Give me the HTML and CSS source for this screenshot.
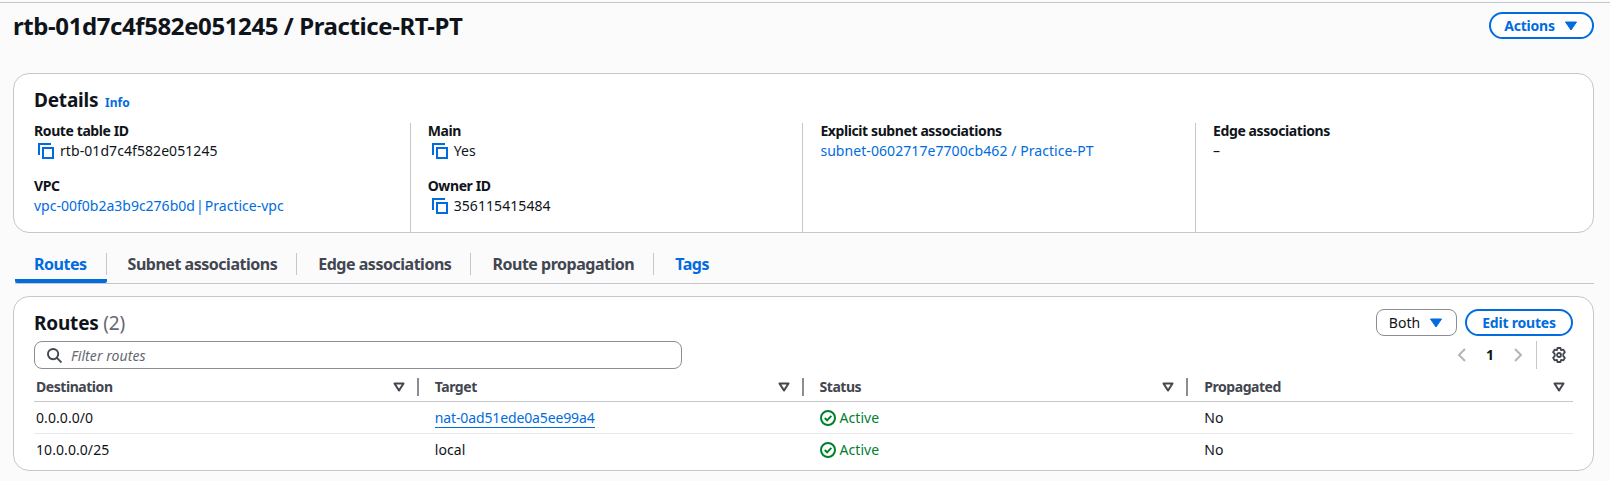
FILE: index.html
```html
<!DOCTYPE html>
<html lang="en">
<head>
<meta charset="utf-8">
<title>Route table</title>
<link rel="stylesheet" href="styles.css">
</head>
<body>
<svg class="defs" width="0" height="0" aria-hidden="true">
  <symbol id="copy" viewBox="0 0 16 16"><path d="M1 12V1h12" fill="none" stroke="currentColor" stroke-width="2"/><rect x="5" y="5" width="10" height="10" fill="none" stroke="currentColor" stroke-width="2"/></symbol>
  <symbol id="caret" viewBox="0 0 16 16"><path d="M2.5 4h11L8 12z" fill="currentColor" stroke="currentColor" stroke-width="1" stroke-linejoin="round"/></symbol>
  <symbol id="sort" viewBox="0 0 16 16"><path d="M3.5 4.5h9L8 11.5z" fill="none" stroke="currentColor" stroke-width="2" stroke-linejoin="round"/></symbol>
  <symbol id="ok" viewBox="0 0 16 16"><circle cx="8" cy="8" r="7" fill="none" stroke="currentColor" stroke-width="2"/><path d="M4.8 8l2.3 2.4 4.2-4.6" fill="none" stroke="currentColor" stroke-width="2"/></symbol>
</svg>
<main class="page">
  <header class="head">
    <h1 class="title">rtb-01d7c4f582e051245 / Practice-RT-PT</h1>
    <button class="btn btn-actions">Actions <svg class="caret"><use href="#caret"/></svg></button>
  </header>

  <section class="card details">
    <h2 class="details-title">Details <a class="info">Info</a></h2>
    <div class="cols">
      <div class="col">
        <div class="kv"><div class="k">Route table ID</div><div class="v"><svg class="copy"><use href="#copy"/></svg>rtb-01d7c4f582e051245</div></div>
        <div class="kv"><div class="k">VPC</div><div class="v link link-tight">vpc-00f0b2a3b9c276b0d | Practice-vpc</div></div>
      </div>
      <div class="col">
        <div class="kv"><div class="k">Main</div><div class="v"><svg class="copy"><use href="#copy"/></svg>Yes</div></div>
        <div class="kv"><div class="k">Owner ID</div><div class="v"><svg class="copy"><use href="#copy"/></svg>356115415484</div></div>
      </div>
      <div class="col">
        <div class="kv"><div class="k">Explicit subnet associations</div><div class="v link">subnet-0602717e7700cb462 / Practice-PT</div></div>
      </div>
      <div class="col">
        <div class="kv"><div class="k">Edge associations</div><div class="v">–</div></div>
      </div>
    </div>
  </section>

  <nav class="tabs">
    <a class="tab active">Routes</a>
    <a class="tab">Subnet associations</a>
    <a class="tab">Edge associations</a>
    <a class="tab">Route propagation</a>
    <a class="tab tab-link">Tags</a>
  </nav>

  <section class="card routes">
    <div class="routes-top">
      <h2 class="routes-title">Routes <span class="count">(2)</span></h2>
      <div class="routes-actions">
        <button class="btn-select">Both <svg class="caret"><use href="#caret"/></svg></button>
        <button class="btn btn-edit">Edit routes</button>
      </div>
    </div>
    <div class="filter-row">
      <div class="filter">
        <svg class="search" viewBox="0 0 16 16"><circle cx="6.5" cy="6.5" r="5.5" fill="none" stroke="currentColor" stroke-width="2"/><path d="M10.5 10.5L15.5 15.5" fill="none" stroke="currentColor" stroke-width="2"/></svg>
        <span class="placeholder">Filter routes</span>
      </div>
      <div class="pager">
        <svg class="chev" viewBox="0 0 16 16"><path d="M11 2L5 8l6 6" fill="none" stroke="currentColor" stroke-width="2"/></svg>
        <span class="page-num">1</span>
        <svg class="chev" viewBox="0 0 16 16"><path d="M5 2l6 6-6 6" fill="none" stroke="currentColor" stroke-width="2"/></svg>
        <span class="pager-sep"></span>
        <svg class="gear" viewBox="0 0 16 16"><path d="M6.5 1h3l.6 2.2 2.3-.6 1.5 2.6-1.6 1.7v2.2l1.6 1.7-1.5 2.6-2.3-.6-.6 2.2h-3l-.6-2.2-2.3.6-1.5-2.6 1.6-1.7V6.9L2.1 5.2l1.5-2.6 2.3.6z" fill="none" stroke="currentColor" stroke-width="1.8" stroke-linejoin="round"/><circle cx="8" cy="8" r="2" fill="none" stroke="currentColor" stroke-width="1.8"/></svg>
      </div>
    </div>
    <div class="table">
      <div class="row row-head">
        <div class="cell first">Destination<svg class="sort"><use href="#sort"/></svg><i class="sep"></i></div>
        <div class="cell">Target<svg class="sort"><use href="#sort"/></svg><i class="sep"></i></div>
        <div class="cell">Status<svg class="sort"><use href="#sort"/></svg><i class="sep"></i></div>
        <div class="cell cell-end">Propagated<svg class="sort"><use href="#sort"/></svg></div>
      </div>
      <div class="row">
        <div class="cell first">0.0.0.0/0</div>
        <div class="cell"><a class="ul">nat-0ad51ede0a5ee99a4</a></div>
        <div class="cell status"><svg class="ok"><use href="#ok"/></svg>Active</div>
        <div class="cell">No</div>
      </div>
      <div class="row row-last">
        <div class="cell first">10.0.0.0/25</div>
        <div class="cell">local</div>
        <div class="cell status"><svg class="ok"><use href="#ok"/></svg>Active</div>
        <div class="cell">No</div>
      </div>
    </div>
  </section>
</main>
</body>
</html>
```
FILE: styles.css
```css
* { box-sizing: border-box; }
html, body { margin: 0; height: 481px; overflow: hidden; }
body { background: #fbfbfb; color: #0f141a; font-family: "Noto Sans", "Open Sans", sans-serif; font-size: 14px; line-height: 20px; letter-spacing: .07px; }
.defs { position: absolute; }
.page { margin-top: 2px; border-top: 1px solid #c6c6cd; padding: 0 16px 0 13px; }
.head { display: flex; justify-content: space-between; height: 70px; padding-top: 8px; }
.title { margin: 0; font-size: 24px; line-height: 30px; font-weight: 700; letter-spacing: -.41px; }
.btn { height: 27px; border: 2px solid #006ce0; border-radius: 14px; background: #fff; color: #006ce0; font: 700 14px/20px "Noto Sans", sans-serif; letter-spacing: -.2px; padding: 0; }
.btn-actions { width: 105px; margin-top: 1px; display: flex; align-items: center; justify-content: center; gap: 8px; }
.caret { width: 16px; height: 16px; color: #006ce0; }
.card { background: #fff; border: 1px solid #c6c6cd; border-radius: 16px; }
.details { height: 160px; padding: 14px 20px 0; }
.details-title { margin: 0; font-size: 19px; line-height: 24px; font-weight: 700; letter-spacing: -.2px; }
.info { color: #006ce0; font-size: 12px; font-weight: 700; margin-left: 2px; letter-spacing: 0; }
.cols { display: grid; grid-template-columns: repeat(4, 392.7px); margin-top: 8px; height: 96px; }
.col { padding-left: 17px; border-left: 1px solid #c6c6cd; margin-left: -17px; }
.col:first-child { border-left: 0; padding-left: 0; margin-left: 0; }
.kv { height: 55px; }
.k { font-weight: 700; line-height: 16px; margin-bottom: 2px; letter-spacing: -.4px; }
.v { display: flex; align-items: center; line-height: 20px; }
.link { color: #006ce0; }
.link-tight { letter-spacing: 0; word-spacing: -2.5px; }
.copy { width: 16px; height: 16px; color: #006ce0; margin: 0 6px 0 4px; }
.tabs { display: flex; height: 51px; margin-left: 2px; border-bottom: 1px solid #c6c6cd; padding-top: 20px; }
.tab { height: 30px; line-height: 22px; font-size: 16px; font-weight: 700; color: #424650; padding: 0 20px 0 21px; position: relative; letter-spacing: -.48px; }
.tab:first-child { padding-left: 19px; }
.tab::after { content: ""; position: absolute; right: 0; top: 0; height: 22px; border-right: 1px solid #c6c6cd; }
.tab:last-child::after { display: none; }
.tab.active { color: #006ce0; border-bottom: 4px solid #006ce0; border-radius: 2px; }
.tab-link { color: #006ce0; }
.routes { margin-top: 12px; height: 175px; padding: 12px 20px 0; }
.routes-top { display: flex; justify-content: space-between; height: 32px; }
.routes-title { margin: 0; font-size: 19px; line-height: 28px; font-weight: 700; letter-spacing: -.2px; }
.count { color: #656871; font-weight: 400; }
.routes-actions { display: flex; gap: 8px; }
.btn-select { width: 81px; height: 27px; border: 1px solid #8c8c94; border-radius: 8px; background: #fff; display: flex; align-items: center; justify-content: center; gap: 8px; font: 400 14px/20px "Noto Sans", sans-serif; color: #0f141a; padding: 0; }
.btn-edit { width: 108px; }
.filter-row { display: flex; justify-content: space-between; height: 28px; }
.filter { width: 648px; height: 28px; border: 1px solid #8c8c94; border-radius: 8px; background: #fff; display: flex; align-items: center; padding-left: 12px; gap: 9px; }
.search { width: 15px; height: 15px; color: #424650; }
.placeholder { font-style: italic; color: #656871; font-size: 14px; padding-top: 1px; }
.pager { display: flex; align-items: center; }
.chev { width: 16px; height: 16px; color: #b4b4bb; }
.page-num { font-weight: 700; width: 40px; text-align: center; }
.pager-sep { width: 1px; height: 28px; background: #c6c6cd; margin: 0 14px 0 10px; }
.gear { width: 16px; height: 16px; color: #424650; margin-right: 6px; }
.table { margin-top: 3px; }
.row { display: grid; grid-template-columns: repeat(4, 1fr); height: 32px; border-bottom: 1px solid #e8e8eb; align-items: center; }
.row-head { height: 30px; border-bottom: 1px solid #c6c6cd; font-weight: 700; color: #424650; letter-spacing: -.45px; }
.row-last { border-bottom: 0; height: 31px; }
.cell { padding-left: 16px; position: relative; }
.cell.first { padding-left: 2px; }
.row-head .cell { display: flex; align-items: center; }
.sort { width: 16px; height: 16px; color: #424650; position: absolute; right: 12px; top: 2px; }
.cell-end .sort { right: 6px; }
.sep { position: absolute; right: 0; top: 1px; width: 2px; height: 18px; background: #8c8c94; }
.ul { color: #006ce0; border-bottom: 1px solid #006ce0; display: inline-block; line-height: 19px; letter-spacing: -.13px; }
.status { color: #00802f; display: flex; align-items: center; }
.ok { width: 16px; height: 16px; color: #00802f; margin-right: 4px; }
```
